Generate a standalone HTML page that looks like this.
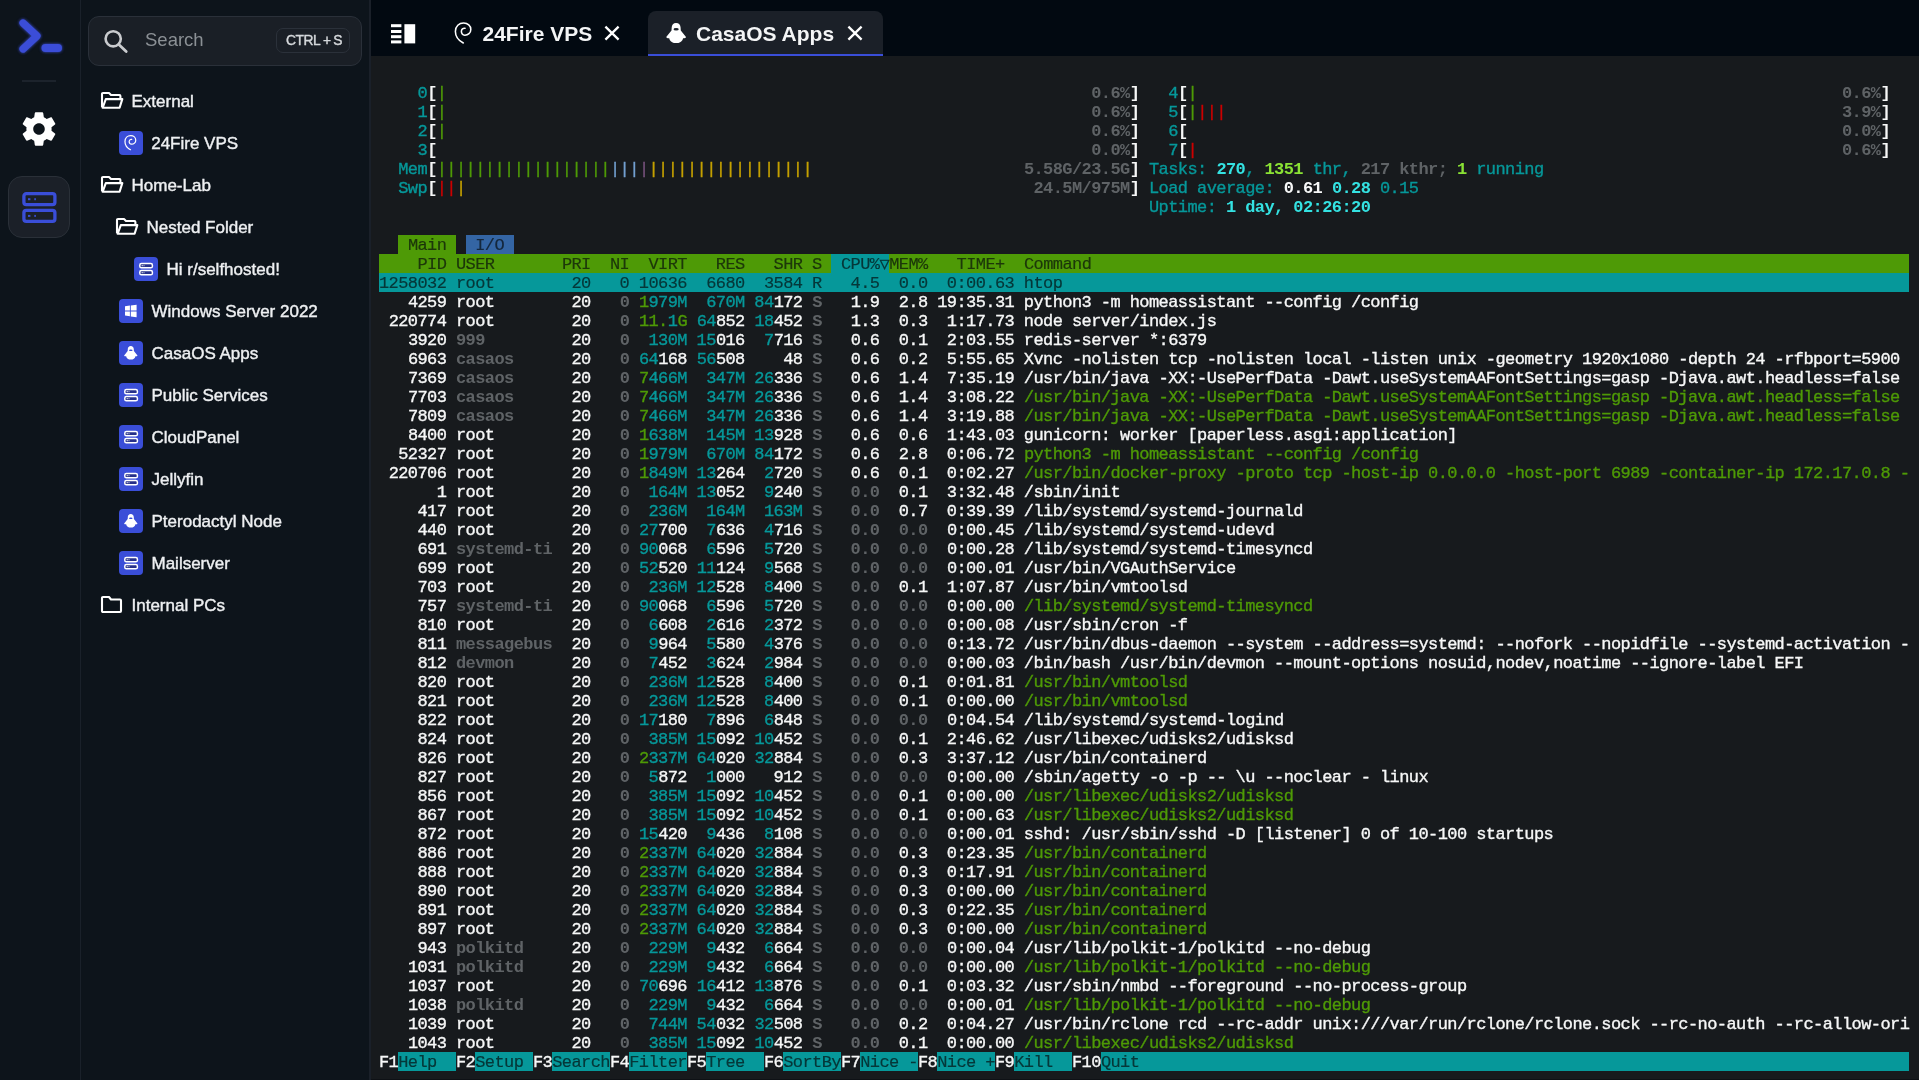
<!DOCTYPE html>
<html><head><meta charset="utf-8"><title>htop</title><style>
*{margin:0;padding:0;box-sizing:border-box}
html,body{width:1919px;height:1080px;overflow:hidden;background:#0d141b}
body{position:relative;font-family:"Liberation Sans",sans-serif}
.abs{position:absolute}
.bg{position:absolute;height:19px}
.t{position:absolute;font-family:"Liberation Mono",monospace;font-size:17.0px;line-height:19px;letter-spacing:-0.5767px;white-space:pre;-webkit-text-stroke:0.35px currentColor}
.b{font-weight:bold;-webkit-text-stroke:0}
.dk{-webkit-text-stroke:0.15px currentColor}

.lbl{position:absolute;font-size:17px;color:#eef0f2;white-space:pre;line-height:20px;-webkit-text-stroke:0.4px #eef0f2}
.ico{position:absolute;width:24px;height:24px;border-radius:4px;background:#3a4ed8}
.tabt{position:absolute;font-size:21px;font-weight:bold;color:#f4f5f6;white-space:pre;line-height:24px}
</style></head>
<body>
<div id="root" style="position:absolute;left:0;top:0;width:1919px;height:1080px;will-change:transform">
<div class="abs" style="left:80px;top:0;width:1px;height:1080px;background:#1a212a"></div>
<div class="abs" style="left:369px;top:0;width:2px;height:1080px;background:#1a2029"></div>
<svg class="abs" style="left:10px;top:12px" width="60" height="50" viewBox="0 0 60 50">
<defs><filter id="glow" x="-30%" y="-30%" width="160%" height="160%"><feGaussianBlur stdDeviation="1.6" result="b"/><feMerge><feMergeNode in="b"/><feMergeNode in="SourceGraphic"/></feMerge></filter></defs>
<g filter="url(#glow)"><path d="M13,11 L27,24 L13,37" fill="none" stroke="#3a4ed8" stroke-width="7.2" stroke-linecap="round" stroke-linejoin="round"/>
<rect x="31.5" y="32" width="20.5" height="8" rx="4" fill="#3a4ed8"/></g></svg>
<div class="abs" style="left:22px;top:80px;width:34px;height:2px;background:#1c232c"></div>
<svg class="abs" style="left:18px;top:107.6px" width="42" height="42" viewBox="0 0 24 24"><path fill="#fff" fill-rule="evenodd" d="M19.14 12.94c.04-.3.06-.61.06-.94 0-.32-.02-.64-.07-.94l2.03-1.58c.18-.14.23-.41.12-.61l-1.92-3.32c-.12-.22-.37-.29-.59-.22l-2.39.96c-.5-.38-1.03-.7-1.62-.94l-.36-2.54c-.04-.24-.24-.41-.48-.41h-3.84c-.24 0-.43.17-.47.41l-.36 2.54c-.59.24-1.13.57-1.62.94l-2.39-.96c-.22-.08-.47 0-.59.22L2.74 8.87c-.12.21-.08.47.12.61l2.03 1.58c-.05.3-.09.63-.09.94s.02.64.07.94l-2.03 1.58c-.18.14-.23.41-.12.61l1.92 3.32c.12.22.37.29.59.22l2.39-.96c.5.38 1.030.7 1.62.94l.36 2.54c.05.24.24.41.48.41h3.84c.24 0 .44-.17.47-.41l.36-2.54c.59-.24 1.13-.56 1.62-.94l2.39.96c.22.08.47 0 .59-.22l1.92-3.32c.12-.22.07-.47-.12-.61l-2.01-1.58zM12 15.3c-1.82 0-3.3-1.48-3.3-3.3s1.48-3.3 3.3-3.3 3.3 1.48 3.3 3.3-1.48 3.3-3.3 3.3z"/></svg>
<div class="abs" style="left:8px;top:176px;width:62px;height:62px;border-radius:14px;background:#1b2028;border:1px solid #2a3038"></div>
<svg class="abs" style="left:20px;top:190px" width="38" height="34" viewBox="0 0 38 34">
<rect x="3.9" y="3.6" width="31" height="11" rx="2.4" fill="none" stroke="#3a4ed8" stroke-width="3.3"/>
<rect x="3.9" y="20.3" width="31" height="11" rx="2.4" fill="none" stroke="#3a4ed8" stroke-width="3.3"/>
<rect x="8" y="8.2" width="2.4" height="2" fill="#3a4ed8"/><rect x="14.3" y="8.2" width="1.6" height="2" fill="#3a4ed8"/>
<rect x="8" y="24.9" width="2.4" height="2" fill="#3a4ed8"/><rect x="14.3" y="24.9" width="1.6" height="2" fill="#3a4ed8"/>
</svg>
<div class="abs" style="left:88px;top:16px;width:274px;height:50px;border-radius:11px;background:#1a1f26;border:1px solid #2a3039"></div>
<svg class="abs" style="left:100px;top:26px" width="30" height="30" viewBox="0 0 30 30">
<circle cx="13.2" cy="12.8" r="7.6" fill="none" stroke="#c9cbce" stroke-width="2.6"/>
<path d="M18.8,18.6 L26.2,25.6" stroke="#c9cbce" stroke-width="2.8" stroke-linecap="round"/></svg>
<div class="abs" style="left:145px;top:29px;font-size:18.5px;line-height:22px;color:#8b9095">Search</div>
<div class="abs" style="left:276px;top:28px;width:74px;height:25px;border-radius:7px;border:1px solid #2b313a"></div>
<div class="abs" style="left:286px;top:31.8px;font-size:13.8px;line-height:18px;letter-spacing:-0.45px;color:#d6d9dc;-webkit-text-stroke:0.4px #d6d9dc;white-space:pre">CTRL<span style="letter-spacing:-1.2px"> </span>+<span style="letter-spacing:-1.2px"> </span>S</div>
<svg class="abs" style="left:98.8px;top:91.0px" width="26" height="20" viewBox="0 0 26 20">
<path d="M3,16.2 V3 Q3,2 4,2 H10 L12,4 H20.5 Q21.4,4 21.4,5 V7" fill="none" stroke="#fff" stroke-width="2.1" stroke-linejoin="round"/>
<path d="M6.8,8.1 H23.3 L20.6,16.8 H3.6 Z" fill="none" stroke="#fff" stroke-width="2.1" stroke-linejoin="round"/>
</svg>
<div class="lbl" style="left:131.5px;top:91.8px">External</div>
<div class="ico" style="left:119px;top:130.8px"></div>
<svg class="abs" style="left:124.2px;top:135.20000000000002px" width="12.60" height="15.40" viewBox="-1 -1 18 22">
<path d="M8.3,20 C4,17.7 0.3,14.2 0.4,8.2 C0.5,3.2 4,0 8.6,0 C12.8,0 15.8,2.9 15.8,6.4 C15.8,9.9 13,12.3 9.7,12.2 C7.6,12.1 6.3,10.3 6.4,8.3 C6.5,6.3 8,5 10,5.3" fill="none" stroke="#fff" stroke-width="1.75" stroke-linecap="round"/></svg>
<div class="lbl" style="left:151.2px;top:133.8px">24Fire VPS</div>
<svg class="abs" style="left:98.8px;top:175.0px" width="26" height="20" viewBox="0 0 26 20">
<path d="M3,16.2 V3 Q3,2 4,2 H10 L12,4 H20.5 Q21.4,4 21.4,5 V7" fill="none" stroke="#fff" stroke-width="2.1" stroke-linejoin="round"/>
<path d="M6.8,8.1 H23.3 L20.6,16.8 H3.6 Z" fill="none" stroke="#fff" stroke-width="2.1" stroke-linejoin="round"/>
</svg>
<div class="lbl" style="left:131.5px;top:175.8px">Home-Lab</div>
<svg class="abs" style="left:114px;top:217.0px" width="26" height="20" viewBox="0 0 26 20">
<path d="M3,16.2 V3 Q3,2 4,2 H10 L12,4 H20.5 Q21.4,4 21.4,5 V7" fill="none" stroke="#fff" stroke-width="2.1" stroke-linejoin="round"/>
<path d="M6.8,8.1 H23.3 L20.6,16.8 H3.6 Z" fill="none" stroke="#fff" stroke-width="2.1" stroke-linejoin="round"/>
</svg>
<div class="lbl" style="left:146.5px;top:217.8px">Nested Folder</div>
<div class="ico" style="left:134px;top:256.8px"><svg width="24" height="24" viewBox="0 0 24 24">
<rect x="5.8" y="6.6" width="12.6" height="4.2" rx="1.6" fill="#26308a" stroke="#fff" stroke-width="1.5"/>
<rect x="5.8" y="13.6" width="12.6" height="4.2" rx="1.6" fill="#26308a" stroke="#fff" stroke-width="1.5"/>
<rect x="7.6" y="8.2" width="1.2" height="1" fill="#fff"/><rect x="9.6" y="8.2" width="0.8" height="1" fill="#fff"/>
<rect x="7.6" y="15.2" width="1.2" height="1" fill="#fff"/><rect x="9.6" y="15.2" width="0.8" height="1" fill="#fff"/>
</svg></div>
<div class="lbl" style="left:166.5px;top:259.8px">Hi r/selfhosted!</div>
<div class="ico" style="left:119px;top:298.8px"><svg width="24" height="24" viewBox="0 0 24 24">
<path d="M6,7.3 L10.9,6.6 V11.5 H6 Z M11.8,6.5 L17.6,5.7 V11.5 H11.8 Z M6,12.4 H10.9 V17.3 L6,16.6 Z M11.8,12.4 H17.6 V18.3 L11.8,17.5 Z" fill="#fff"/>
</svg></div>
<div class="lbl" style="left:151.5px;top:301.8px">Windows Server 2022</div>
<div class="ico" style="left:119px;top:340.8px"></div>
<svg class="abs" style="left:124.2px;top:346.1px" width="13.60" height="13.60" viewBox="0 0 20.3 20.3">
<path d="M10,0 C7.4,0 5.8,2 5.7,4.6 L5.5,7.5 L0.2,14 C0.5,15.1 2,15.3 3.2,15.2 C3.8,18.2 6.5,20.3 10.15,20.3 C13.8,20.3 16.5,18.2 17.1,15.2 C18.3,15.3 19.8,15.1 20.1,14 L14.8,7.5 L14.6,4.6 C14.5,2 12.9,0 10.15,0 Z" fill="#fff"/>
<ellipse cx="10.15" cy="6.3" rx="2.6" ry="1.25" fill="#3a4ed8"/>
</svg>
<div class="lbl" style="left:151.5px;top:343.8px">CasaOS Apps</div>
<div class="ico" style="left:119px;top:382.8px"><svg width="24" height="24" viewBox="0 0 24 24">
<rect x="5.8" y="6.6" width="12.6" height="4.2" rx="1.6" fill="#26308a" stroke="#fff" stroke-width="1.5"/>
<rect x="5.8" y="13.6" width="12.6" height="4.2" rx="1.6" fill="#26308a" stroke="#fff" stroke-width="1.5"/>
<rect x="7.6" y="8.2" width="1.2" height="1" fill="#fff"/><rect x="9.6" y="8.2" width="0.8" height="1" fill="#fff"/>
<rect x="7.6" y="15.2" width="1.2" height="1" fill="#fff"/><rect x="9.6" y="15.2" width="0.8" height="1" fill="#fff"/>
</svg></div>
<div class="lbl" style="left:151.5px;top:385.8px">Public Services</div>
<div class="ico" style="left:119px;top:424.8px"><svg width="24" height="24" viewBox="0 0 24 24">
<rect x="5.8" y="6.6" width="12.6" height="4.2" rx="1.6" fill="#26308a" stroke="#fff" stroke-width="1.5"/>
<rect x="5.8" y="13.6" width="12.6" height="4.2" rx="1.6" fill="#26308a" stroke="#fff" stroke-width="1.5"/>
<rect x="7.6" y="8.2" width="1.2" height="1" fill="#fff"/><rect x="9.6" y="8.2" width="0.8" height="1" fill="#fff"/>
<rect x="7.6" y="15.2" width="1.2" height="1" fill="#fff"/><rect x="9.6" y="15.2" width="0.8" height="1" fill="#fff"/>
</svg></div>
<div class="lbl" style="left:151.5px;top:427.8px">CloudPanel</div>
<div class="ico" style="left:119px;top:466.8px"><svg width="24" height="24" viewBox="0 0 24 24">
<rect x="5.8" y="6.6" width="12.6" height="4.2" rx="1.6" fill="#26308a" stroke="#fff" stroke-width="1.5"/>
<rect x="5.8" y="13.6" width="12.6" height="4.2" rx="1.6" fill="#26308a" stroke="#fff" stroke-width="1.5"/>
<rect x="7.6" y="8.2" width="1.2" height="1" fill="#fff"/><rect x="9.6" y="8.2" width="0.8" height="1" fill="#fff"/>
<rect x="7.6" y="15.2" width="1.2" height="1" fill="#fff"/><rect x="9.6" y="15.2" width="0.8" height="1" fill="#fff"/>
</svg></div>
<div class="lbl" style="left:151.5px;top:469.8px">Jellyfin</div>
<div class="ico" style="left:119px;top:508.8px"></div>
<svg class="abs" style="left:124.2px;top:514.1px" width="13.60" height="13.60" viewBox="0 0 20.3 20.3">
<path d="M10,0 C7.4,0 5.8,2 5.7,4.6 L5.5,7.5 L0.2,14 C0.5,15.1 2,15.3 3.2,15.2 C3.8,18.2 6.5,20.3 10.15,20.3 C13.8,20.3 16.5,18.2 17.1,15.2 C18.3,15.3 19.8,15.1 20.1,14 L14.8,7.5 L14.6,4.6 C14.5,2 12.9,0 10.15,0 Z" fill="#fff"/>
<ellipse cx="10.15" cy="6.3" rx="2.6" ry="1.25" fill="#3a4ed8"/>
</svg>
<div class="lbl" style="left:151.5px;top:511.8px">Pterodactyl Node</div>
<div class="ico" style="left:119px;top:550.8px"><svg width="24" height="24" viewBox="0 0 24 24">
<rect x="5.8" y="6.6" width="12.6" height="4.2" rx="1.6" fill="#26308a" stroke="#fff" stroke-width="1.5"/>
<rect x="5.8" y="13.6" width="12.6" height="4.2" rx="1.6" fill="#26308a" stroke="#fff" stroke-width="1.5"/>
<rect x="7.6" y="8.2" width="1.2" height="1" fill="#fff"/><rect x="9.6" y="8.2" width="0.8" height="1" fill="#fff"/>
<rect x="7.6" y="15.2" width="1.2" height="1" fill="#fff"/><rect x="9.6" y="15.2" width="0.8" height="1" fill="#fff"/>
</svg></div>
<div class="lbl" style="left:151.5px;top:553.8px">Mailserver</div>
<svg class="abs" style="left:98.8px;top:595.0px" width="26" height="20" viewBox="0 0 26 20">
<path d="M3,3 Q3,2 4,2 H10 L12,4.5 H21 Q22,4.5 22,5.5 V16 Q22,17 21,17 H4 Q3,17 3,16 Z" fill="none" stroke="#fff" stroke-width="2.1" stroke-linejoin="round"/>
</svg>
<div class="lbl" style="left:131.5px;top:595.8px">Internal PCs</div>
<div class="abs" style="left:371px;top:0;width:1548px;height:56px;background:#020911"></div>
<svg class="abs" style="left:390px;top:23px" width="27" height="22" viewBox="0 0 27 22">
<rect x="1" y="1.2" width="10.4" height="3" fill="#fff"/><rect x="1" y="7" width="10.4" height="3" fill="#fff"/>
<rect x="1" y="12.2" width="10.4" height="3" fill="#fff"/><rect x="1" y="17.4" width="10.4" height="3" fill="#fff"/>
<rect x="14.4" y="1.2" width="10.8" height="19.2" fill="#fff"/></svg>
<svg class="abs" style="left:454.4px;top:22.3px" width="18.00" height="22.00" viewBox="-1 -1 18 22">
<path d="M8.3,20 C4,17.7 0.3,14.2 0.4,8.2 C0.5,3.2 4,0 8.6,0 C12.8,0 15.8,2.9 15.8,6.4 C15.8,9.9 13,12.3 9.7,12.2 C7.6,12.1 6.3,10.3 6.4,8.3 C6.5,6.3 8,5 10,5.3" fill="none" stroke="#fff" stroke-width="1.55" stroke-linecap="round"/></svg>
<div class="tabt" style="left:482.5px;top:21.8px">24Fire VPS</div>
<svg class="abs" style="left:602px;top:23px" width="20" height="20" viewBox="0 0 20 20">
<path d="M3.4,3.6 L16.6,16.6 M16.6,3.6 L3.4,16.6" stroke="#fff" stroke-width="2.3" stroke-linecap="butt"/></svg>
<div class="abs" style="left:648px;top:11px;width:235px;height:45px;border-radius:8px 8px 0 0;background:#1b2028"></div>
<div class="abs" style="left:648px;top:53.5px;width:235px;height:2.5px;background:#3a4ed8"></div>
<svg class="abs" style="left:665.8px;top:22.7px" width="20.30" height="20.30" viewBox="0 0 20.3 20.3">
<path d="M10,0 C7.4,0 5.8,2 5.7,4.6 L5.5,7.5 L0.2,14 C0.5,15.1 2,15.3 3.2,15.2 C3.8,18.2 6.5,20.3 10.15,20.3 C13.8,20.3 16.5,18.2 17.1,15.2 C18.3,15.3 19.8,15.1 20.1,14 L14.8,7.5 L14.6,4.6 C14.5,2 12.9,0 10.15,0 Z" fill="#fff"/>
<ellipse cx="10.15" cy="6.3" rx="2.6" ry="1.25" fill="#1b2028"/>
</svg>
<div class="tabt" style="left:696px;top:21.8px">CasaOS Apps</div>
<svg class="abs" style="left:845px;top:23px" width="20" height="20" viewBox="0 0 20 20">
<path d="M3.4,3.6 L16.6,16.6 M16.6,3.6 L3.4,16.6" stroke="#fff" stroke-width="2.3" stroke-linecap="butt"/></svg>
<div class="abs" style="left:371px;top:56px;width:1548px;height:1024px;background:#171a1d"></div>
<div class="bg" style="left:398.250px;top:235px;width:57.750px;background:#4e9a06"></div>
<div class="bg" style="left:465.625px;top:235px;width:48.125px;background:#3465a4"></div>
<div class="bg" style="left:379.000px;top:254px;width:452.375px;background:#4e9a06"></div>
<div class="bg" style="left:831.375px;top:254px;width:57.750px;background:#06989a"></div>
<div class="bg" style="left:889.125px;top:254px;width:1020.250px;background:#4e9a06"></div>
<div class="bg" style="left:379.000px;top:273px;width:1530.375px;background:#06989a"></div>
<div class="bg" style="left:398.250px;top:1052px;width:57.750px;background:#06989a"></div>
<div class="bg" style="left:475.250px;top:1052px;width:57.750px;background:#06989a"></div>
<div class="bg" style="left:552.250px;top:1052px;width:57.750px;background:#06989a"></div>
<div class="bg" style="left:629.250px;top:1052px;width:57.750px;background:#06989a"></div>
<div class="bg" style="left:706.250px;top:1052px;width:57.750px;background:#06989a"></div>
<div class="bg" style="left:783.250px;top:1052px;width:57.750px;background:#06989a"></div>
<div class="bg" style="left:860.250px;top:1052px;width:57.750px;background:#06989a"></div>
<div class="bg" style="left:937.250px;top:1052px;width:57.750px;background:#06989a"></div>
<div class="bg" style="left:1014.250px;top:1052px;width:57.750px;background:#06989a"></div>
<div class="bg" style="left:1100.875px;top:1052px;width:808.500px;background:#06989a"></div>
<span class="t" style="left:417.500px;top:84.3px;color:#06989a">0</span>
<span class="t b" style="left:427.125px;top:84.3px;color:#f7f8f8">[</span>
<span class="t" style="left:436.750px;top:84.3px;color:#4e9a06">|</span>
<span class="t b" style="left:1091.250px;top:84.3px;color:#5f6366">0.6%</span>
<span class="t b" style="left:1129.750px;top:84.3px;color:#f7f8f8">]</span>
<span class="t" style="left:1168.250px;top:84.3px;color:#06989a">4</span>
<span class="t b" style="left:1177.875px;top:84.3px;color:#f7f8f8">[</span>
<span class="t" style="left:1187.500px;top:84.3px;color:#4e9a06">|</span>
<span class="t b" style="left:1842.000px;top:84.3px;color:#5f6366">0.6%</span>
<span class="t b" style="left:1880.500px;top:84.3px;color:#f7f8f8">]</span>
<span class="t" style="left:417.500px;top:103.3px;color:#06989a">1</span>
<span class="t b" style="left:427.125px;top:103.3px;color:#f7f8f8">[</span>
<span class="t" style="left:436.750px;top:103.3px;color:#4e9a06">|</span>
<span class="t b" style="left:1091.250px;top:103.3px;color:#5f6366">0.6%</span>
<span class="t b" style="left:1129.750px;top:103.3px;color:#f7f8f8">]</span>
<span class="t" style="left:1168.250px;top:103.3px;color:#06989a">5</span>
<span class="t b" style="left:1177.875px;top:103.3px;color:#f7f8f8">[</span>
<span class="t" style="left:1187.500px;top:103.3px;color:#4e9a06">|</span>
<span class="t" style="left:1197.125px;top:103.3px;color:#cc0000">|||</span>
<span class="t b" style="left:1842.000px;top:103.3px;color:#5f6366">3.9%</span>
<span class="t b" style="left:1880.500px;top:103.3px;color:#f7f8f8">]</span>
<span class="t" style="left:417.500px;top:122.3px;color:#06989a">2</span>
<span class="t b" style="left:427.125px;top:122.3px;color:#f7f8f8">[</span>
<span class="t" style="left:436.750px;top:122.3px;color:#4e9a06">|</span>
<span class="t b" style="left:1091.250px;top:122.3px;color:#5f6366">0.6%</span>
<span class="t b" style="left:1129.750px;top:122.3px;color:#f7f8f8">]</span>
<span class="t" style="left:1168.250px;top:122.3px;color:#06989a">6</span>
<span class="t b" style="left:1177.875px;top:122.3px;color:#f7f8f8">[</span>
<span class="t b" style="left:1842.000px;top:122.3px;color:#5f6366">0.0%</span>
<span class="t b" style="left:1880.500px;top:122.3px;color:#f7f8f8">]</span>
<span class="t" style="left:417.500px;top:141.3px;color:#06989a">3</span>
<span class="t b" style="left:427.125px;top:141.3px;color:#f7f8f8">[</span>
<span class="t b" style="left:1091.250px;top:141.3px;color:#5f6366">0.0%</span>
<span class="t b" style="left:1129.750px;top:141.3px;color:#f7f8f8">]</span>
<span class="t" style="left:1168.250px;top:141.3px;color:#06989a">7</span>
<span class="t b" style="left:1177.875px;top:141.3px;color:#f7f8f8">[</span>
<span class="t" style="left:1187.500px;top:141.3px;color:#cc0000">|</span>
<span class="t b" style="left:1842.000px;top:141.3px;color:#5f6366">0.6%</span>
<span class="t b" style="left:1880.500px;top:141.3px;color:#f7f8f8">]</span>
<span class="t" style="left:398.250px;top:160.3px;color:#06989a">Mem</span>
<span class="t b" style="left:427.125px;top:160.3px;color:#f7f8f8">[</span>
<span class="t" style="left:436.750px;top:160.3px;color:#4e9a06">||||||||||||||||||</span>
<span class="t" style="left:610.000px;top:160.3px;color:#729fcf">|||</span>
<span class="t" style="left:638.875px;top:160.3px;color:#75507b">|</span>
<span class="t" style="left:648.500px;top:160.3px;color:#c4a000">|||||||||||||||||</span>
<span class="t b" style="left:1023.875px;top:160.3px;color:#5f6366">5.58G/23.5G</span>
<span class="t b" style="left:1129.750px;top:160.3px;color:#f7f8f8">]</span>
<span class="t" style="left:1149.000px;top:160.3px;color:#06989a">Tasks:</span>
<span class="t b" style="left:1216.375px;top:160.3px;color:#34e2e2">270</span>
<span class="t" style="left:1245.250px;top:160.3px;color:#06989a">,</span>
<span class="t b" style="left:1264.500px;top:160.3px;color:#8ae234">1351</span>
<span class="t" style="left:1312.625px;top:160.3px;color:#06989a">thr,</span>
<span class="t b" style="left:1360.750px;top:160.3px;color:#5f6366">217 kthr;</span>
<span class="t b" style="left:1457.000px;top:160.3px;color:#8ae234">1</span>
<span class="t" style="left:1476.250px;top:160.3px;color:#06989a">running</span>
<span class="t" style="left:398.250px;top:179.3px;color:#06989a">Swp</span>
<span class="t b" style="left:427.125px;top:179.3px;color:#f7f8f8">[</span>
<span class="t" style="left:436.750px;top:179.3px;color:#cc0000">||</span>
<span class="t" style="left:456.000px;top:179.3px;color:#c4a000">|</span>
<span class="t b" style="left:1033.500px;top:179.3px;color:#5f6366">24.5M/975M</span>
<span class="t b" style="left:1129.750px;top:179.3px;color:#f7f8f8">]</span>
<span class="t" style="left:1149.000px;top:179.3px;color:#06989a">Load average:</span>
<span class="t b" style="left:1283.750px;top:179.3px;color:#f7f8f8">0.61</span>
<span class="t b" style="left:1331.875px;top:179.3px;color:#34e2e2">0.28</span>
<span class="t" style="left:1380.000px;top:179.3px;color:#06989a">0.15</span>
<span class="t" style="left:1149.000px;top:198.3px;color:#06989a">Uptime:</span>
<span class="t b" style="left:1226.000px;top:198.3px;color:#34e2e2">1 day, 02:26:20</span>
<span class="t dk" style="left:407.875px;top:236.3px;color:rgba(6,10,12,0.68)">Main   I/O</span>
<span class="t dk" style="left:417.500px;top:255.3px;color:rgba(6,10,12,0.68)">PID USER</span>
<span class="t dk" style="left:561.875px;top:255.3px;color:rgba(6,10,12,0.68)">PRI  NI  VIRT   RES   SHR S  CPU%▽MEM%   TIME+  Command</span>
<span class="t dk" style="left:379.000px;top:274.3px;color:rgba(6,10,12,0.68)">1258032 root</span>
<span class="t dk" style="left:571.500px;top:274.3px;color:rgba(6,10,12,0.68)">20   0 10636  6680  3584 R   4.5  0.0  0:00.63 htop</span>
<span class="t" style="left:407.875px;top:293.3px;color:#f7f8f8">4259 root</span>
<span class="t" style="left:571.500px;top:293.3px;color:#f7f8f8">20</span>
<span class="t b" style="left:619.625px;top:293.3px;color:#5f6366">0</span>
<span class="t" style="left:638.875px;top:293.3px;color:#4e9a06">1</span>
<span class="t" style="left:648.500px;top:293.3px;color:#06989a">979M  670M 84</span>
<span class="t" style="left:773.625px;top:293.3px;color:#f7f8f8">172</span>
<span class="t b" style="left:812.125px;top:293.3px;color:#5f6366">S</span>
<span class="t" style="left:850.625px;top:293.3px;color:#f7f8f8">1.9  2.8 19:35.31 python3 -m homeassistant --config /config</span>
<span class="t" style="left:388.625px;top:312.3px;color:#f7f8f8">220774 root</span>
<span class="t" style="left:571.500px;top:312.3px;color:#f7f8f8">20</span>
<span class="t b" style="left:619.625px;top:312.3px;color:#5f6366">0</span>
<span class="t" style="left:638.875px;top:312.3px;color:#4e9a06">11.</span>
<span class="t" style="left:667.750px;top:312.3px;color:#06989a">1</span>
<span class="t" style="left:677.375px;top:312.3px;color:#4e9a06">G</span>
<span class="t" style="left:696.625px;top:312.3px;color:#06989a">64</span>
<span class="t" style="left:715.875px;top:312.3px;color:#f7f8f8">852</span>
<span class="t" style="left:754.375px;top:312.3px;color:#06989a">18</span>
<span class="t" style="left:773.625px;top:312.3px;color:#f7f8f8">452</span>
<span class="t b" style="left:812.125px;top:312.3px;color:#5f6366">S</span>
<span class="t" style="left:850.625px;top:312.3px;color:#f7f8f8">1.3  0.3  1:17.73 node server/index.js</span>
<span class="t" style="left:407.875px;top:331.3px;color:#f7f8f8">3920</span>
<span class="t b" style="left:456.000px;top:331.3px;color:#5f6366">999</span>
<span class="t" style="left:571.500px;top:331.3px;color:#f7f8f8">20</span>
<span class="t b" style="left:619.625px;top:331.3px;color:#5f6366">0</span>
<span class="t" style="left:648.500px;top:331.3px;color:#06989a">130M 15</span>
<span class="t" style="left:715.875px;top:331.3px;color:#f7f8f8">016</span>
<span class="t" style="left:764.000px;top:331.3px;color:#06989a">7</span>
<span class="t" style="left:773.625px;top:331.3px;color:#f7f8f8">716</span>
<span class="t b" style="left:812.125px;top:331.3px;color:#5f6366">S</span>
<span class="t" style="left:850.625px;top:331.3px;color:#f7f8f8">0.6  0.1  2:03.55 redis-server *:6379</span>
<span class="t" style="left:407.875px;top:350.3px;color:#f7f8f8">6963</span>
<span class="t b" style="left:456.000px;top:350.3px;color:#5f6366">casaos</span>
<span class="t" style="left:571.500px;top:350.3px;color:#f7f8f8">20</span>
<span class="t b" style="left:619.625px;top:350.3px;color:#5f6366">0</span>
<span class="t" style="left:638.875px;top:350.3px;color:#06989a">64</span>
<span class="t" style="left:658.125px;top:350.3px;color:#f7f8f8">168</span>
<span class="t" style="left:696.625px;top:350.3px;color:#06989a">56</span>
<span class="t" style="left:715.875px;top:350.3px;color:#f7f8f8">508</span>
<span class="t" style="left:783.250px;top:350.3px;color:#f7f8f8">48</span>
<span class="t b" style="left:812.125px;top:350.3px;color:#5f6366">S</span>
<span class="t" style="left:850.625px;top:350.3px;color:#f7f8f8">0.6  0.2  5:55.65 Xvnc -nolisten tcp -nolisten local -listen unix -geometry 1920x1080 -depth 24 -rfbport=5900</span>
<span class="t" style="left:407.875px;top:369.3px;color:#f7f8f8">7369</span>
<span class="t b" style="left:456.000px;top:369.3px;color:#5f6366">casaos</span>
<span class="t" style="left:571.500px;top:369.3px;color:#f7f8f8">20</span>
<span class="t b" style="left:619.625px;top:369.3px;color:#5f6366">0</span>
<span class="t" style="left:638.875px;top:369.3px;color:#4e9a06">7</span>
<span class="t" style="left:648.500px;top:369.3px;color:#06989a">466M  347M 26</span>
<span class="t" style="left:773.625px;top:369.3px;color:#f7f8f8">336</span>
<span class="t b" style="left:812.125px;top:369.3px;color:#5f6366">S</span>
<span class="t" style="left:850.625px;top:369.3px;color:#f7f8f8">0.6  1.4  7:35.19 /usr/bin/java -XX:-UsePerfData -Dawt.useSystemAAFontSettings=gasp -Djava.awt.headless=false</span>
<span class="t" style="left:407.875px;top:388.3px;color:#f7f8f8">7703</span>
<span class="t b" style="left:456.000px;top:388.3px;color:#5f6366">casaos</span>
<span class="t" style="left:571.500px;top:388.3px;color:#f7f8f8">20</span>
<span class="t b" style="left:619.625px;top:388.3px;color:#5f6366">0</span>
<span class="t" style="left:638.875px;top:388.3px;color:#4e9a06">7</span>
<span class="t" style="left:648.500px;top:388.3px;color:#06989a">466M  347M 26</span>
<span class="t" style="left:773.625px;top:388.3px;color:#f7f8f8">336</span>
<span class="t b" style="left:812.125px;top:388.3px;color:#5f6366">S</span>
<span class="t" style="left:850.625px;top:388.3px;color:#f7f8f8">0.6  1.4  3:08.22</span>
<span class="t" style="left:1023.875px;top:388.3px;color:#4e9a06">/usr/bin/java -XX:-UsePerfData -Dawt.useSystemAAFontSettings=gasp -Djava.awt.headless=false</span>
<span class="t" style="left:407.875px;top:407.3px;color:#f7f8f8">7809</span>
<span class="t b" style="left:456.000px;top:407.3px;color:#5f6366">casaos</span>
<span class="t" style="left:571.500px;top:407.3px;color:#f7f8f8">20</span>
<span class="t b" style="left:619.625px;top:407.3px;color:#5f6366">0</span>
<span class="t" style="left:638.875px;top:407.3px;color:#4e9a06">7</span>
<span class="t" style="left:648.500px;top:407.3px;color:#06989a">466M  347M 26</span>
<span class="t" style="left:773.625px;top:407.3px;color:#f7f8f8">336</span>
<span class="t b" style="left:812.125px;top:407.3px;color:#5f6366">S</span>
<span class="t" style="left:850.625px;top:407.3px;color:#f7f8f8">0.6  1.4  3:19.88</span>
<span class="t" style="left:1023.875px;top:407.3px;color:#4e9a06">/usr/bin/java -XX:-UsePerfData -Dawt.useSystemAAFontSettings=gasp -Djava.awt.headless=false</span>
<span class="t" style="left:407.875px;top:426.3px;color:#f7f8f8">8400 root</span>
<span class="t" style="left:571.500px;top:426.3px;color:#f7f8f8">20</span>
<span class="t b" style="left:619.625px;top:426.3px;color:#5f6366">0</span>
<span class="t" style="left:638.875px;top:426.3px;color:#4e9a06">1</span>
<span class="t" style="left:648.500px;top:426.3px;color:#06989a">638M  145M 13</span>
<span class="t" style="left:773.625px;top:426.3px;color:#f7f8f8">928</span>
<span class="t b" style="left:812.125px;top:426.3px;color:#5f6366">S</span>
<span class="t" style="left:850.625px;top:426.3px;color:#f7f8f8">0.6  0.6  1:43.03 gunicorn: worker [paperless.asgi:application]</span>
<span class="t" style="left:398.250px;top:445.3px;color:#f7f8f8">52327 root</span>
<span class="t" style="left:571.500px;top:445.3px;color:#f7f8f8">20</span>
<span class="t b" style="left:619.625px;top:445.3px;color:#5f6366">0</span>
<span class="t" style="left:638.875px;top:445.3px;color:#4e9a06">1</span>
<span class="t" style="left:648.500px;top:445.3px;color:#06989a">979M  670M 84</span>
<span class="t" style="left:773.625px;top:445.3px;color:#f7f8f8">172</span>
<span class="t b" style="left:812.125px;top:445.3px;color:#5f6366">S</span>
<span class="t" style="left:850.625px;top:445.3px;color:#f7f8f8">0.6  2.8  0:06.72</span>
<span class="t" style="left:1023.875px;top:445.3px;color:#4e9a06">python3 -m homeassistant --config /config</span>
<span class="t" style="left:388.625px;top:464.3px;color:#f7f8f8">220706 root</span>
<span class="t" style="left:571.500px;top:464.3px;color:#f7f8f8">20</span>
<span class="t b" style="left:619.625px;top:464.3px;color:#5f6366">0</span>
<span class="t" style="left:638.875px;top:464.3px;color:#4e9a06">1</span>
<span class="t" style="left:648.500px;top:464.3px;color:#06989a">849M 13</span>
<span class="t" style="left:715.875px;top:464.3px;color:#f7f8f8">264</span>
<span class="t" style="left:764.000px;top:464.3px;color:#06989a">2</span>
<span class="t" style="left:773.625px;top:464.3px;color:#f7f8f8">720</span>
<span class="t b" style="left:812.125px;top:464.3px;color:#5f6366">S</span>
<span class="t" style="left:850.625px;top:464.3px;color:#f7f8f8">0.6  0.1  0:02.27</span>
<span class="t" style="left:1023.875px;top:464.3px;color:#4e9a06">/usr/bin/docker-proxy -proto tcp -host-ip 0.0.0.0 -host-port 6989 -container-ip 172.17.0.8 -</span>
<span class="t" style="left:436.750px;top:483.3px;color:#f7f8f8">1 root</span>
<span class="t" style="left:571.500px;top:483.3px;color:#f7f8f8">20</span>
<span class="t b" style="left:619.625px;top:483.3px;color:#5f6366">0</span>
<span class="t" style="left:648.500px;top:483.3px;color:#06989a">164M 13</span>
<span class="t" style="left:715.875px;top:483.3px;color:#f7f8f8">052</span>
<span class="t" style="left:764.000px;top:483.3px;color:#06989a">9</span>
<span class="t" style="left:773.625px;top:483.3px;color:#f7f8f8">240</span>
<span class="t b" style="left:812.125px;top:483.3px;color:#5f6366">S   0.0</span>
<span class="t" style="left:898.750px;top:483.3px;color:#f7f8f8">0.1  3:32.48 /sbin/init</span>
<span class="t" style="left:417.500px;top:502.3px;color:#f7f8f8">417 root</span>
<span class="t" style="left:571.500px;top:502.3px;color:#f7f8f8">20</span>
<span class="t b" style="left:619.625px;top:502.3px;color:#5f6366">0</span>
<span class="t" style="left:648.500px;top:502.3px;color:#06989a">236M  164M  163M</span>
<span class="t b" style="left:812.125px;top:502.3px;color:#5f6366">S   0.0</span>
<span class="t" style="left:898.750px;top:502.3px;color:#f7f8f8">0.7  0:39.39 /lib/systemd/systemd-journald</span>
<span class="t" style="left:417.500px;top:521.3px;color:#f7f8f8">440 root</span>
<span class="t" style="left:571.500px;top:521.3px;color:#f7f8f8">20</span>
<span class="t b" style="left:619.625px;top:521.3px;color:#5f6366">0</span>
<span class="t" style="left:638.875px;top:521.3px;color:#06989a">27</span>
<span class="t" style="left:658.125px;top:521.3px;color:#f7f8f8">700</span>
<span class="t" style="left:706.250px;top:521.3px;color:#06989a">7</span>
<span class="t" style="left:715.875px;top:521.3px;color:#f7f8f8">636</span>
<span class="t" style="left:764.000px;top:521.3px;color:#06989a">4</span>
<span class="t" style="left:773.625px;top:521.3px;color:#f7f8f8">716</span>
<span class="t b" style="left:812.125px;top:521.3px;color:#5f6366">S   0.0  0.0</span>
<span class="t" style="left:946.875px;top:521.3px;color:#f7f8f8">0:00.45 /lib/systemd/systemd-udevd</span>
<span class="t" style="left:417.500px;top:540.3px;color:#f7f8f8">691</span>
<span class="t b" style="left:456.000px;top:540.3px;color:#5f6366">systemd-ti</span>
<span class="t" style="left:571.500px;top:540.3px;color:#f7f8f8">20</span>
<span class="t b" style="left:619.625px;top:540.3px;color:#5f6366">0</span>
<span class="t" style="left:638.875px;top:540.3px;color:#06989a">90</span>
<span class="t" style="left:658.125px;top:540.3px;color:#f7f8f8">068</span>
<span class="t" style="left:706.250px;top:540.3px;color:#06989a">6</span>
<span class="t" style="left:715.875px;top:540.3px;color:#f7f8f8">596</span>
<span class="t" style="left:764.000px;top:540.3px;color:#06989a">5</span>
<span class="t" style="left:773.625px;top:540.3px;color:#f7f8f8">720</span>
<span class="t b" style="left:812.125px;top:540.3px;color:#5f6366">S   0.0  0.0</span>
<span class="t" style="left:946.875px;top:540.3px;color:#f7f8f8">0:00.28 /lib/systemd/systemd-timesyncd</span>
<span class="t" style="left:417.500px;top:559.3px;color:#f7f8f8">699 root</span>
<span class="t" style="left:571.500px;top:559.3px;color:#f7f8f8">20</span>
<span class="t b" style="left:619.625px;top:559.3px;color:#5f6366">0</span>
<span class="t" style="left:638.875px;top:559.3px;color:#06989a">52</span>
<span class="t" style="left:658.125px;top:559.3px;color:#f7f8f8">520</span>
<span class="t" style="left:696.625px;top:559.3px;color:#06989a">11</span>
<span class="t" style="left:715.875px;top:559.3px;color:#f7f8f8">124</span>
<span class="t" style="left:764.000px;top:559.3px;color:#06989a">9</span>
<span class="t" style="left:773.625px;top:559.3px;color:#f7f8f8">568</span>
<span class="t b" style="left:812.125px;top:559.3px;color:#5f6366">S   0.0  0.0</span>
<span class="t" style="left:946.875px;top:559.3px;color:#f7f8f8">0:00.01 /usr/bin/VGAuthService</span>
<span class="t" style="left:417.500px;top:578.3px;color:#f7f8f8">703 root</span>
<span class="t" style="left:571.500px;top:578.3px;color:#f7f8f8">20</span>
<span class="t b" style="left:619.625px;top:578.3px;color:#5f6366">0</span>
<span class="t" style="left:648.500px;top:578.3px;color:#06989a">236M 12</span>
<span class="t" style="left:715.875px;top:578.3px;color:#f7f8f8">528</span>
<span class="t" style="left:764.000px;top:578.3px;color:#06989a">8</span>
<span class="t" style="left:773.625px;top:578.3px;color:#f7f8f8">400</span>
<span class="t b" style="left:812.125px;top:578.3px;color:#5f6366">S   0.0</span>
<span class="t" style="left:898.750px;top:578.3px;color:#f7f8f8">0.1  1:07.87 /usr/bin/vmtoolsd</span>
<span class="t" style="left:417.500px;top:597.3px;color:#f7f8f8">757</span>
<span class="t b" style="left:456.000px;top:597.3px;color:#5f6366">systemd-ti</span>
<span class="t" style="left:571.500px;top:597.3px;color:#f7f8f8">20</span>
<span class="t b" style="left:619.625px;top:597.3px;color:#5f6366">0</span>
<span class="t" style="left:638.875px;top:597.3px;color:#06989a">90</span>
<span class="t" style="left:658.125px;top:597.3px;color:#f7f8f8">068</span>
<span class="t" style="left:706.250px;top:597.3px;color:#06989a">6</span>
<span class="t" style="left:715.875px;top:597.3px;color:#f7f8f8">596</span>
<span class="t" style="left:764.000px;top:597.3px;color:#06989a">5</span>
<span class="t" style="left:773.625px;top:597.3px;color:#f7f8f8">720</span>
<span class="t b" style="left:812.125px;top:597.3px;color:#5f6366">S   0.0  0.0</span>
<span class="t" style="left:946.875px;top:597.3px;color:#f7f8f8">0:00.00</span>
<span class="t" style="left:1023.875px;top:597.3px;color:#4e9a06">/lib/systemd/systemd-timesyncd</span>
<span class="t" style="left:417.500px;top:616.3px;color:#f7f8f8">810 root</span>
<span class="t" style="left:571.500px;top:616.3px;color:#f7f8f8">20</span>
<span class="t b" style="left:619.625px;top:616.3px;color:#5f6366">0</span>
<span class="t" style="left:648.500px;top:616.3px;color:#06989a">6</span>
<span class="t" style="left:658.125px;top:616.3px;color:#f7f8f8">608</span>
<span class="t" style="left:706.250px;top:616.3px;color:#06989a">2</span>
<span class="t" style="left:715.875px;top:616.3px;color:#f7f8f8">616</span>
<span class="t" style="left:764.000px;top:616.3px;color:#06989a">2</span>
<span class="t" style="left:773.625px;top:616.3px;color:#f7f8f8">372</span>
<span class="t b" style="left:812.125px;top:616.3px;color:#5f6366">S   0.0  0.0</span>
<span class="t" style="left:946.875px;top:616.3px;color:#f7f8f8">0:00.08 /usr/sbin/cron -f</span>
<span class="t" style="left:417.500px;top:635.3px;color:#f7f8f8">811</span>
<span class="t b" style="left:456.000px;top:635.3px;color:#5f6366">messagebus</span>
<span class="t" style="left:571.500px;top:635.3px;color:#f7f8f8">20</span>
<span class="t b" style="left:619.625px;top:635.3px;color:#5f6366">0</span>
<span class="t" style="left:648.500px;top:635.3px;color:#06989a">9</span>
<span class="t" style="left:658.125px;top:635.3px;color:#f7f8f8">964</span>
<span class="t" style="left:706.250px;top:635.3px;color:#06989a">5</span>
<span class="t" style="left:715.875px;top:635.3px;color:#f7f8f8">580</span>
<span class="t" style="left:764.000px;top:635.3px;color:#06989a">4</span>
<span class="t" style="left:773.625px;top:635.3px;color:#f7f8f8">376</span>
<span class="t b" style="left:812.125px;top:635.3px;color:#5f6366">S   0.0  0.0</span>
<span class="t" style="left:946.875px;top:635.3px;color:#f7f8f8">0:13.72 /usr/bin/dbus-daemon --system --address=systemd: --nofork --nopidfile --systemd-activation -</span>
<span class="t" style="left:417.500px;top:654.3px;color:#f7f8f8">812</span>
<span class="t b" style="left:456.000px;top:654.3px;color:#5f6366">devmon</span>
<span class="t" style="left:571.500px;top:654.3px;color:#f7f8f8">20</span>
<span class="t b" style="left:619.625px;top:654.3px;color:#5f6366">0</span>
<span class="t" style="left:648.500px;top:654.3px;color:#06989a">7</span>
<span class="t" style="left:658.125px;top:654.3px;color:#f7f8f8">452</span>
<span class="t" style="left:706.250px;top:654.3px;color:#06989a">3</span>
<span class="t" style="left:715.875px;top:654.3px;color:#f7f8f8">624</span>
<span class="t" style="left:764.000px;top:654.3px;color:#06989a">2</span>
<span class="t" style="left:773.625px;top:654.3px;color:#f7f8f8">984</span>
<span class="t b" style="left:812.125px;top:654.3px;color:#5f6366">S   0.0  0.0</span>
<span class="t" style="left:946.875px;top:654.3px;color:#f7f8f8">0:00.03 /bin/bash /usr/bin/devmon --mount-options nosuid,nodev,noatime --ignore-label EFI</span>
<span class="t" style="left:417.500px;top:673.3px;color:#f7f8f8">820 root</span>
<span class="t" style="left:571.500px;top:673.3px;color:#f7f8f8">20</span>
<span class="t b" style="left:619.625px;top:673.3px;color:#5f6366">0</span>
<span class="t" style="left:648.500px;top:673.3px;color:#06989a">236M 12</span>
<span class="t" style="left:715.875px;top:673.3px;color:#f7f8f8">528</span>
<span class="t" style="left:764.000px;top:673.3px;color:#06989a">8</span>
<span class="t" style="left:773.625px;top:673.3px;color:#f7f8f8">400</span>
<span class="t b" style="left:812.125px;top:673.3px;color:#5f6366">S   0.0</span>
<span class="t" style="left:898.750px;top:673.3px;color:#f7f8f8">0.1  0:01.81</span>
<span class="t" style="left:1023.875px;top:673.3px;color:#4e9a06">/usr/bin/vmtoolsd</span>
<span class="t" style="left:417.500px;top:692.3px;color:#f7f8f8">821 root</span>
<span class="t" style="left:571.500px;top:692.3px;color:#f7f8f8">20</span>
<span class="t b" style="left:619.625px;top:692.3px;color:#5f6366">0</span>
<span class="t" style="left:648.500px;top:692.3px;color:#06989a">236M 12</span>
<span class="t" style="left:715.875px;top:692.3px;color:#f7f8f8">528</span>
<span class="t" style="left:764.000px;top:692.3px;color:#06989a">8</span>
<span class="t" style="left:773.625px;top:692.3px;color:#f7f8f8">400</span>
<span class="t b" style="left:812.125px;top:692.3px;color:#5f6366">S   0.0</span>
<span class="t" style="left:898.750px;top:692.3px;color:#f7f8f8">0.1  0:00.00</span>
<span class="t" style="left:1023.875px;top:692.3px;color:#4e9a06">/usr/bin/vmtoolsd</span>
<span class="t" style="left:417.500px;top:711.3px;color:#f7f8f8">822 root</span>
<span class="t" style="left:571.500px;top:711.3px;color:#f7f8f8">20</span>
<span class="t b" style="left:619.625px;top:711.3px;color:#5f6366">0</span>
<span class="t" style="left:638.875px;top:711.3px;color:#06989a">17</span>
<span class="t" style="left:658.125px;top:711.3px;color:#f7f8f8">180</span>
<span class="t" style="left:706.250px;top:711.3px;color:#06989a">7</span>
<span class="t" style="left:715.875px;top:711.3px;color:#f7f8f8">896</span>
<span class="t" style="left:764.000px;top:711.3px;color:#06989a">6</span>
<span class="t" style="left:773.625px;top:711.3px;color:#f7f8f8">848</span>
<span class="t b" style="left:812.125px;top:711.3px;color:#5f6366">S   0.0  0.0</span>
<span class="t" style="left:946.875px;top:711.3px;color:#f7f8f8">0:04.54 /lib/systemd/systemd-logind</span>
<span class="t" style="left:417.500px;top:730.3px;color:#f7f8f8">824 root</span>
<span class="t" style="left:571.500px;top:730.3px;color:#f7f8f8">20</span>
<span class="t b" style="left:619.625px;top:730.3px;color:#5f6366">0</span>
<span class="t" style="left:648.500px;top:730.3px;color:#06989a">385M 15</span>
<span class="t" style="left:715.875px;top:730.3px;color:#f7f8f8">092</span>
<span class="t" style="left:754.375px;top:730.3px;color:#06989a">10</span>
<span class="t" style="left:773.625px;top:730.3px;color:#f7f8f8">452</span>
<span class="t b" style="left:812.125px;top:730.3px;color:#5f6366">S   0.0</span>
<span class="t" style="left:898.750px;top:730.3px;color:#f7f8f8">0.1  2:46.62 /usr/libexec/udisks2/udisksd</span>
<span class="t" style="left:417.500px;top:749.3px;color:#f7f8f8">826 root</span>
<span class="t" style="left:571.500px;top:749.3px;color:#f7f8f8">20</span>
<span class="t b" style="left:619.625px;top:749.3px;color:#5f6366">0</span>
<span class="t" style="left:638.875px;top:749.3px;color:#4e9a06">2</span>
<span class="t" style="left:648.500px;top:749.3px;color:#06989a">337M 64</span>
<span class="t" style="left:715.875px;top:749.3px;color:#f7f8f8">020</span>
<span class="t" style="left:754.375px;top:749.3px;color:#06989a">32</span>
<span class="t" style="left:773.625px;top:749.3px;color:#f7f8f8">884</span>
<span class="t b" style="left:812.125px;top:749.3px;color:#5f6366">S   0.0</span>
<span class="t" style="left:898.750px;top:749.3px;color:#f7f8f8">0.3  3:37.12 /usr/bin/containerd</span>
<span class="t" style="left:417.500px;top:768.3px;color:#f7f8f8">827 root</span>
<span class="t" style="left:571.500px;top:768.3px;color:#f7f8f8">20</span>
<span class="t b" style="left:619.625px;top:768.3px;color:#5f6366">0</span>
<span class="t" style="left:648.500px;top:768.3px;color:#06989a">5</span>
<span class="t" style="left:658.125px;top:768.3px;color:#f7f8f8">872</span>
<span class="t" style="left:706.250px;top:768.3px;color:#06989a">1</span>
<span class="t" style="left:715.875px;top:768.3px;color:#f7f8f8">000   912</span>
<span class="t b" style="left:812.125px;top:768.3px;color:#5f6366">S   0.0  0.0</span>
<span class="t" style="left:946.875px;top:768.3px;color:#f7f8f8">0:00.00 /sbin/agetty -o -p -- \u --noclear - linux</span>
<span class="t" style="left:417.500px;top:787.3px;color:#f7f8f8">856 root</span>
<span class="t" style="left:571.500px;top:787.3px;color:#f7f8f8">20</span>
<span class="t b" style="left:619.625px;top:787.3px;color:#5f6366">0</span>
<span class="t" style="left:648.500px;top:787.3px;color:#06989a">385M 15</span>
<span class="t" style="left:715.875px;top:787.3px;color:#f7f8f8">092</span>
<span class="t" style="left:754.375px;top:787.3px;color:#06989a">10</span>
<span class="t" style="left:773.625px;top:787.3px;color:#f7f8f8">452</span>
<span class="t b" style="left:812.125px;top:787.3px;color:#5f6366">S   0.0</span>
<span class="t" style="left:898.750px;top:787.3px;color:#f7f8f8">0.1  0:00.00</span>
<span class="t" style="left:1023.875px;top:787.3px;color:#4e9a06">/usr/libexec/udisks2/udisksd</span>
<span class="t" style="left:417.500px;top:806.3px;color:#f7f8f8">867 root</span>
<span class="t" style="left:571.500px;top:806.3px;color:#f7f8f8">20</span>
<span class="t b" style="left:619.625px;top:806.3px;color:#5f6366">0</span>
<span class="t" style="left:648.500px;top:806.3px;color:#06989a">385M 15</span>
<span class="t" style="left:715.875px;top:806.3px;color:#f7f8f8">092</span>
<span class="t" style="left:754.375px;top:806.3px;color:#06989a">10</span>
<span class="t" style="left:773.625px;top:806.3px;color:#f7f8f8">452</span>
<span class="t b" style="left:812.125px;top:806.3px;color:#5f6366">S   0.0</span>
<span class="t" style="left:898.750px;top:806.3px;color:#f7f8f8">0.1  0:00.63</span>
<span class="t" style="left:1023.875px;top:806.3px;color:#4e9a06">/usr/libexec/udisks2/udisksd</span>
<span class="t" style="left:417.500px;top:825.3px;color:#f7f8f8">872 root</span>
<span class="t" style="left:571.500px;top:825.3px;color:#f7f8f8">20</span>
<span class="t b" style="left:619.625px;top:825.3px;color:#5f6366">0</span>
<span class="t" style="left:638.875px;top:825.3px;color:#06989a">15</span>
<span class="t" style="left:658.125px;top:825.3px;color:#f7f8f8">420</span>
<span class="t" style="left:706.250px;top:825.3px;color:#06989a">9</span>
<span class="t" style="left:715.875px;top:825.3px;color:#f7f8f8">436</span>
<span class="t" style="left:764.000px;top:825.3px;color:#06989a">8</span>
<span class="t" style="left:773.625px;top:825.3px;color:#f7f8f8">108</span>
<span class="t b" style="left:812.125px;top:825.3px;color:#5f6366">S   0.0  0.0</span>
<span class="t" style="left:946.875px;top:825.3px;color:#f7f8f8">0:00.01 sshd: /usr/sbin/sshd -D [listener] 0 of 10-100 startups</span>
<span class="t" style="left:417.500px;top:844.3px;color:#f7f8f8">886 root</span>
<span class="t" style="left:571.500px;top:844.3px;color:#f7f8f8">20</span>
<span class="t b" style="left:619.625px;top:844.3px;color:#5f6366">0</span>
<span class="t" style="left:638.875px;top:844.3px;color:#4e9a06">2</span>
<span class="t" style="left:648.500px;top:844.3px;color:#06989a">337M 64</span>
<span class="t" style="left:715.875px;top:844.3px;color:#f7f8f8">020</span>
<span class="t" style="left:754.375px;top:844.3px;color:#06989a">32</span>
<span class="t" style="left:773.625px;top:844.3px;color:#f7f8f8">884</span>
<span class="t b" style="left:812.125px;top:844.3px;color:#5f6366">S   0.0</span>
<span class="t" style="left:898.750px;top:844.3px;color:#f7f8f8">0.3  0:23.35</span>
<span class="t" style="left:1023.875px;top:844.3px;color:#4e9a06">/usr/bin/containerd</span>
<span class="t" style="left:417.500px;top:863.3px;color:#f7f8f8">888 root</span>
<span class="t" style="left:571.500px;top:863.3px;color:#f7f8f8">20</span>
<span class="t b" style="left:619.625px;top:863.3px;color:#5f6366">0</span>
<span class="t" style="left:638.875px;top:863.3px;color:#4e9a06">2</span>
<span class="t" style="left:648.500px;top:863.3px;color:#06989a">337M 64</span>
<span class="t" style="left:715.875px;top:863.3px;color:#f7f8f8">020</span>
<span class="t" style="left:754.375px;top:863.3px;color:#06989a">32</span>
<span class="t" style="left:773.625px;top:863.3px;color:#f7f8f8">884</span>
<span class="t b" style="left:812.125px;top:863.3px;color:#5f6366">S   0.0</span>
<span class="t" style="left:898.750px;top:863.3px;color:#f7f8f8">0.3  0:17.91</span>
<span class="t" style="left:1023.875px;top:863.3px;color:#4e9a06">/usr/bin/containerd</span>
<span class="t" style="left:417.500px;top:882.3px;color:#f7f8f8">890 root</span>
<span class="t" style="left:571.500px;top:882.3px;color:#f7f8f8">20</span>
<span class="t b" style="left:619.625px;top:882.3px;color:#5f6366">0</span>
<span class="t" style="left:638.875px;top:882.3px;color:#4e9a06">2</span>
<span class="t" style="left:648.500px;top:882.3px;color:#06989a">337M 64</span>
<span class="t" style="left:715.875px;top:882.3px;color:#f7f8f8">020</span>
<span class="t" style="left:754.375px;top:882.3px;color:#06989a">32</span>
<span class="t" style="left:773.625px;top:882.3px;color:#f7f8f8">884</span>
<span class="t b" style="left:812.125px;top:882.3px;color:#5f6366">S   0.0</span>
<span class="t" style="left:898.750px;top:882.3px;color:#f7f8f8">0.3  0:00.00</span>
<span class="t" style="left:1023.875px;top:882.3px;color:#4e9a06">/usr/bin/containerd</span>
<span class="t" style="left:417.500px;top:901.3px;color:#f7f8f8">891 root</span>
<span class="t" style="left:571.500px;top:901.3px;color:#f7f8f8">20</span>
<span class="t b" style="left:619.625px;top:901.3px;color:#5f6366">0</span>
<span class="t" style="left:638.875px;top:901.3px;color:#4e9a06">2</span>
<span class="t" style="left:648.500px;top:901.3px;color:#06989a">337M 64</span>
<span class="t" style="left:715.875px;top:901.3px;color:#f7f8f8">020</span>
<span class="t" style="left:754.375px;top:901.3px;color:#06989a">32</span>
<span class="t" style="left:773.625px;top:901.3px;color:#f7f8f8">884</span>
<span class="t b" style="left:812.125px;top:901.3px;color:#5f6366">S   0.0</span>
<span class="t" style="left:898.750px;top:901.3px;color:#f7f8f8">0.3  0:22.35</span>
<span class="t" style="left:1023.875px;top:901.3px;color:#4e9a06">/usr/bin/containerd</span>
<span class="t" style="left:417.500px;top:920.3px;color:#f7f8f8">897 root</span>
<span class="t" style="left:571.500px;top:920.3px;color:#f7f8f8">20</span>
<span class="t b" style="left:619.625px;top:920.3px;color:#5f6366">0</span>
<span class="t" style="left:638.875px;top:920.3px;color:#4e9a06">2</span>
<span class="t" style="left:648.500px;top:920.3px;color:#06989a">337M 64</span>
<span class="t" style="left:715.875px;top:920.3px;color:#f7f8f8">020</span>
<span class="t" style="left:754.375px;top:920.3px;color:#06989a">32</span>
<span class="t" style="left:773.625px;top:920.3px;color:#f7f8f8">884</span>
<span class="t b" style="left:812.125px;top:920.3px;color:#5f6366">S   0.0</span>
<span class="t" style="left:898.750px;top:920.3px;color:#f7f8f8">0.3  0:00.00</span>
<span class="t" style="left:1023.875px;top:920.3px;color:#4e9a06">/usr/bin/containerd</span>
<span class="t" style="left:417.500px;top:939.3px;color:#f7f8f8">943</span>
<span class="t b" style="left:456.000px;top:939.3px;color:#5f6366">polkitd</span>
<span class="t" style="left:571.500px;top:939.3px;color:#f7f8f8">20</span>
<span class="t b" style="left:619.625px;top:939.3px;color:#5f6366">0</span>
<span class="t" style="left:648.500px;top:939.3px;color:#06989a">229M  9</span>
<span class="t" style="left:715.875px;top:939.3px;color:#f7f8f8">432</span>
<span class="t" style="left:764.000px;top:939.3px;color:#06989a">6</span>
<span class="t" style="left:773.625px;top:939.3px;color:#f7f8f8">664</span>
<span class="t b" style="left:812.125px;top:939.3px;color:#5f6366">S   0.0  0.0</span>
<span class="t" style="left:946.875px;top:939.3px;color:#f7f8f8">0:00.04 /usr/lib/polkit-1/polkitd --no-debug</span>
<span class="t" style="left:407.875px;top:958.3px;color:#f7f8f8">1031</span>
<span class="t b" style="left:456.000px;top:958.3px;color:#5f6366">polkitd</span>
<span class="t" style="left:571.500px;top:958.3px;color:#f7f8f8">20</span>
<span class="t b" style="left:619.625px;top:958.3px;color:#5f6366">0</span>
<span class="t" style="left:648.500px;top:958.3px;color:#06989a">229M  9</span>
<span class="t" style="left:715.875px;top:958.3px;color:#f7f8f8">432</span>
<span class="t" style="left:764.000px;top:958.3px;color:#06989a">6</span>
<span class="t" style="left:773.625px;top:958.3px;color:#f7f8f8">664</span>
<span class="t b" style="left:812.125px;top:958.3px;color:#5f6366">S   0.0  0.0</span>
<span class="t" style="left:946.875px;top:958.3px;color:#f7f8f8">0:00.00</span>
<span class="t" style="left:1023.875px;top:958.3px;color:#4e9a06">/usr/lib/polkit-1/polkitd --no-debug</span>
<span class="t" style="left:407.875px;top:977.3px;color:#f7f8f8">1037 root</span>
<span class="t" style="left:571.500px;top:977.3px;color:#f7f8f8">20</span>
<span class="t b" style="left:619.625px;top:977.3px;color:#5f6366">0</span>
<span class="t" style="left:638.875px;top:977.3px;color:#06989a">70</span>
<span class="t" style="left:658.125px;top:977.3px;color:#f7f8f8">696</span>
<span class="t" style="left:696.625px;top:977.3px;color:#06989a">16</span>
<span class="t" style="left:715.875px;top:977.3px;color:#f7f8f8">412</span>
<span class="t" style="left:754.375px;top:977.3px;color:#06989a">13</span>
<span class="t" style="left:773.625px;top:977.3px;color:#f7f8f8">876</span>
<span class="t b" style="left:812.125px;top:977.3px;color:#5f6366">S   0.0</span>
<span class="t" style="left:898.750px;top:977.3px;color:#f7f8f8">0.1  0:03.32 /usr/sbin/nmbd --foreground --no-process-group</span>
<span class="t" style="left:407.875px;top:996.3px;color:#f7f8f8">1038</span>
<span class="t b" style="left:456.000px;top:996.3px;color:#5f6366">polkitd</span>
<span class="t" style="left:571.500px;top:996.3px;color:#f7f8f8">20</span>
<span class="t b" style="left:619.625px;top:996.3px;color:#5f6366">0</span>
<span class="t" style="left:648.500px;top:996.3px;color:#06989a">229M  9</span>
<span class="t" style="left:715.875px;top:996.3px;color:#f7f8f8">432</span>
<span class="t" style="left:764.000px;top:996.3px;color:#06989a">6</span>
<span class="t" style="left:773.625px;top:996.3px;color:#f7f8f8">664</span>
<span class="t b" style="left:812.125px;top:996.3px;color:#5f6366">S   0.0  0.0</span>
<span class="t" style="left:946.875px;top:996.3px;color:#f7f8f8">0:00.01</span>
<span class="t" style="left:1023.875px;top:996.3px;color:#4e9a06">/usr/lib/polkit-1/polkitd --no-debug</span>
<span class="t" style="left:407.875px;top:1015.3px;color:#f7f8f8">1039 root</span>
<span class="t" style="left:571.500px;top:1015.3px;color:#f7f8f8">20</span>
<span class="t b" style="left:619.625px;top:1015.3px;color:#5f6366">0</span>
<span class="t" style="left:648.500px;top:1015.3px;color:#06989a">744M 54</span>
<span class="t" style="left:715.875px;top:1015.3px;color:#f7f8f8">032</span>
<span class="t" style="left:754.375px;top:1015.3px;color:#06989a">32</span>
<span class="t" style="left:773.625px;top:1015.3px;color:#f7f8f8">508</span>
<span class="t b" style="left:812.125px;top:1015.3px;color:#5f6366">S   0.0</span>
<span class="t" style="left:898.750px;top:1015.3px;color:#f7f8f8">0.2  0:04.27 /usr/bin/rclone rcd --rc-addr unix:///var/run/rclone/rclone.sock --rc-no-auth --rc-allow-ori</span>
<span class="t" style="left:407.875px;top:1034.3px;color:#f7f8f8">1043 root</span>
<span class="t" style="left:571.500px;top:1034.3px;color:#f7f8f8">20</span>
<span class="t b" style="left:619.625px;top:1034.3px;color:#5f6366">0</span>
<span class="t" style="left:648.500px;top:1034.3px;color:#06989a">385M 15</span>
<span class="t" style="left:715.875px;top:1034.3px;color:#f7f8f8">092</span>
<span class="t" style="left:754.375px;top:1034.3px;color:#06989a">10</span>
<span class="t" style="left:773.625px;top:1034.3px;color:#f7f8f8">452</span>
<span class="t b" style="left:812.125px;top:1034.3px;color:#5f6366">S   0.0</span>
<span class="t" style="left:898.750px;top:1034.3px;color:#f7f8f8">0.1  0:00.00</span>
<span class="t" style="left:1023.875px;top:1034.3px;color:#4e9a06">/usr/libexec/udisks2/udisksd</span>
<span class="t" style="left:379.000px;top:1053.3px;color:#f7f8f8">F1</span>
<span class="t dk" style="left:398.250px;top:1053.3px;color:rgba(6,10,12,0.68)">Help</span>
<span class="t" style="left:456.000px;top:1053.3px;color:#f7f8f8">F2</span>
<span class="t dk" style="left:475.250px;top:1053.3px;color:rgba(6,10,12,0.68)">Setup</span>
<span class="t" style="left:533.000px;top:1053.3px;color:#f7f8f8">F3</span>
<span class="t dk" style="left:552.250px;top:1053.3px;color:rgba(6,10,12,0.68)">Search</span>
<span class="t" style="left:610.000px;top:1053.3px;color:#f7f8f8">F4</span>
<span class="t dk" style="left:629.250px;top:1053.3px;color:rgba(6,10,12,0.68)">Filter</span>
<span class="t" style="left:687.000px;top:1053.3px;color:#f7f8f8">F5</span>
<span class="t dk" style="left:706.250px;top:1053.3px;color:rgba(6,10,12,0.68)">Tree</span>
<span class="t" style="left:764.000px;top:1053.3px;color:#f7f8f8">F6</span>
<span class="t dk" style="left:783.250px;top:1053.3px;color:rgba(6,10,12,0.68)">SortBy</span>
<span class="t" style="left:841.000px;top:1053.3px;color:#f7f8f8">F7</span>
<span class="t dk" style="left:860.250px;top:1053.3px;color:rgba(6,10,12,0.68)">Nice -</span>
<span class="t" style="left:918.000px;top:1053.3px;color:#f7f8f8">F8</span>
<span class="t dk" style="left:937.250px;top:1053.3px;color:rgba(6,10,12,0.68)">Nice +</span>
<span class="t" style="left:995.000px;top:1053.3px;color:#f7f8f8">F9</span>
<span class="t dk" style="left:1014.250px;top:1053.3px;color:rgba(6,10,12,0.68)">Kill</span>
<span class="t" style="left:1072.000px;top:1053.3px;color:#f7f8f8">F10</span>
<span class="t dk" style="left:1100.875px;top:1053.3px;color:rgba(6,10,12,0.68)">Quit</span>
<div class="abs" style="left:371px;top:1079px;width:1548px;height:1px;background:#0e1115"></div>
</div>
</body></html>
